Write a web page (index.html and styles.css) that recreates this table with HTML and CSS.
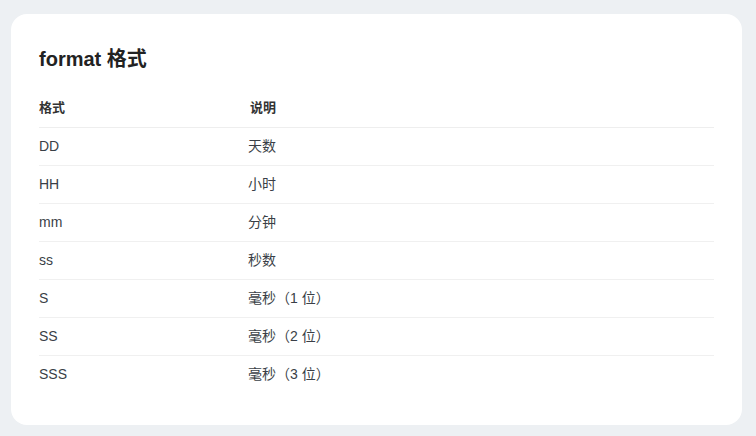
FILE: index.html
```html
<!DOCTYPE html>
<html lang="zh">
<head>
<meta charset="utf-8">
<link rel="stylesheet" href="styles.css">
</head>
<body>
<div class="card">
  <h2 class="title">format 格式</h2>
  <table class="fmt">
    <thead>
      <tr><th class="c1">格式</th><th class="c2">说明</th></tr>
    </thead>
    <tbody>
      <tr><td>DD</td><td>天数</td></tr>
      <tr><td>HH</td><td>小时</td></tr>
      <tr><td>mm</td><td>分钟</td></tr>
      <tr><td>ss</td><td>秒数</td></tr>
      <tr><td>S</td><td>毫秒（1 位）</td></tr>
      <tr><td>SS</td><td>毫秒（2 位）</td></tr>
      <tr><td>SSS</td><td>毫秒（3 位）</td></tr>
    </tbody>
  </table>
</div>
</body>
</html>
```
FILE: styles.css
```css
html, body {
  margin: 0;
  padding: 0;
  background: #edf0f3;
}
body {
  padding: 14px 14px 11px 11px;
  font-family: "Liberation Sans", Arial, "Noto Sans CJK SC", sans-serif;
  color: #333;
}
.card {
  background: #fff;
  border-radius: 16px;
  padding: 31px 28px 31px 28px;
  height: 411px;
  box-sizing: border-box;
}
.title {
  margin: 0 0 16px 0;
  font-size: 20px;
  line-height: 28px;
  font-weight: bold;
  color: #222;
}
.fmt {
  width: 100%;
  border-collapse: collapse;
  font-size: 14px;
}
.fmt th, .fmt td {
  text-align: left;
  padding: 0;
  height: 37px;
  line-height: 18px;
  vertical-align: middle;
}
.fmt td {
  height: 38px;
  padding-bottom: 2px;
  box-sizing: border-box;
}
.fmt th {
  font-weight: bold;
  font-size: 13px;
  color: #333;
  height: 38px;
  border-bottom: 1px solid #eeeeee;
}
.fmt .c1 {
  width: 209px;
}
.fmt .c2 {
  padding-left: 2px;
}
.fmt tbody tr {
  border-bottom: 1px solid #f0f0f0;
}
.fmt tbody tr:last-child {
  border-bottom: none;
}
.fmt td {
  color: #3a3f47;
}
```
